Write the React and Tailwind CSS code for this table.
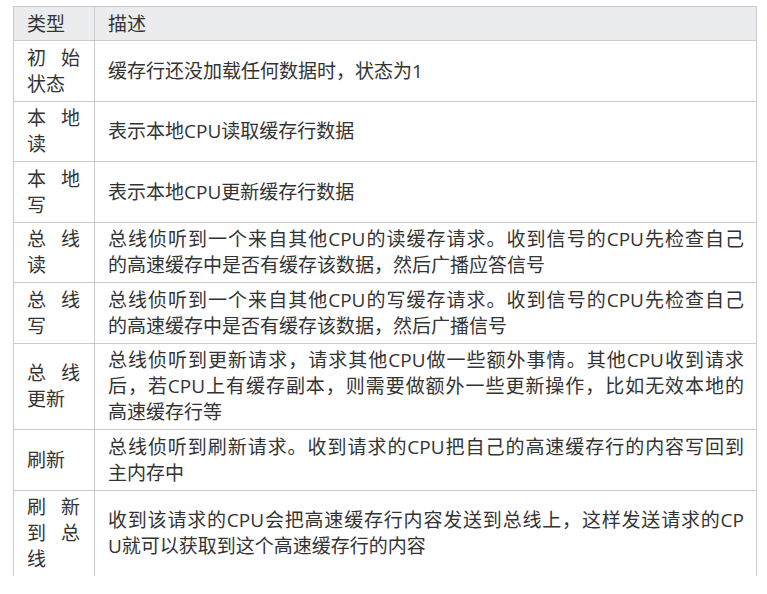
const rows = [
    { type: '初始状态', desc: ['缓存行还没加载任何数据时，状态为1'] },
    { type: '本地读', desc: ['表示本地CPU读取缓存行数据'] },
    { type: '本地写', desc: ['表示本地CPU更新缓存行数据'] },
    {
        type: '总线读',
        desc: ['总线侦听到一个来自其他CPU的读缓存请求。收到信号的CPU先检查自己', '的高速缓存中是否有缓存该数据，然后广播应答信号'],
    },
    {
        type: '总线写',
        desc: ['总线侦听到一个来自其他CPU的写缓存请求。收到信号的CPU先检查自己', '的高速缓存中是否有缓存该数据，然后广播信号'],
    },
    {
        type: '总线更新',
        desc: [
            '总线侦听到更新请求，请求其他CPU做一些额外事情。其他CPU收到请求',
            '后，若CPU上有缓存副本，则需要做额外一些更新操作，比如无效本地的',
            '高速缓存行等',
        ],
    },
    { type: '刷新', desc: ['总线侦听到刷新请求。收到请求的CPU把自己的高速缓存行的内容写回到', '主内存中'] },
    {
        type: '刷新到总线',
        desc: ['收到该请求的CPU会把高速缓存行内容发送到总线上，这样发送请求的CP', 'U就可以获取到这个高速缓存行的内容'],
    },
]

export default function App() {
    return (
        <div className="min-h-screen bg-white pt-[6px] pl-[13px] text-[#333] text-[19px] leading-[26px] font-['Open_Sans','Noto_Sans_CJK_SC',sans-serif]">
            <div className="w-[744px] border-l border-r border-t border-[#c9cbd1]">
                {/* header */}
                <div className="grid grid-cols-[81px_1fr] bg-[#ebecee] border-b border-[#c9cbd1]">
                    <div className="border-r border-[#c9cbd1] pl-[13px] pr-[14px] py-[3.5px]">类型</div>
                    <div className="pl-[13px] pr-[12px] py-[3.5px]">描述</div>
                </div>

                {rows.map((row, i) => (
                    <div
                        key={row.type}
                        className={`grid grid-cols-[81px_1fr] ${i === rows.length - 1 ? '' : 'border-b border-[#c9cbd1]'}`}
                    >
                        <div className="flex items-center border-r border-[#c9cbd1] pl-[13px] pr-[14px] py-[3.75px]">
                            <div className="w-full text-justify">{row.type}</div>
                        </div>
                        <div className="flex flex-col justify-center pl-[13px] pr-[12px] py-[3.75px]">
                            {row.desc.map((line, j) => (
                                <div
                                    key={j}
                                    className={`whitespace-nowrap ${j < row.desc.length - 1 ? 'text-justify [text-align-last:justify]' : ''}`}
                                >
                                    {line}
                                </div>
                            ))}
                        </div>
                    </div>
                ))}
            </div>
        </div>
    )
}
